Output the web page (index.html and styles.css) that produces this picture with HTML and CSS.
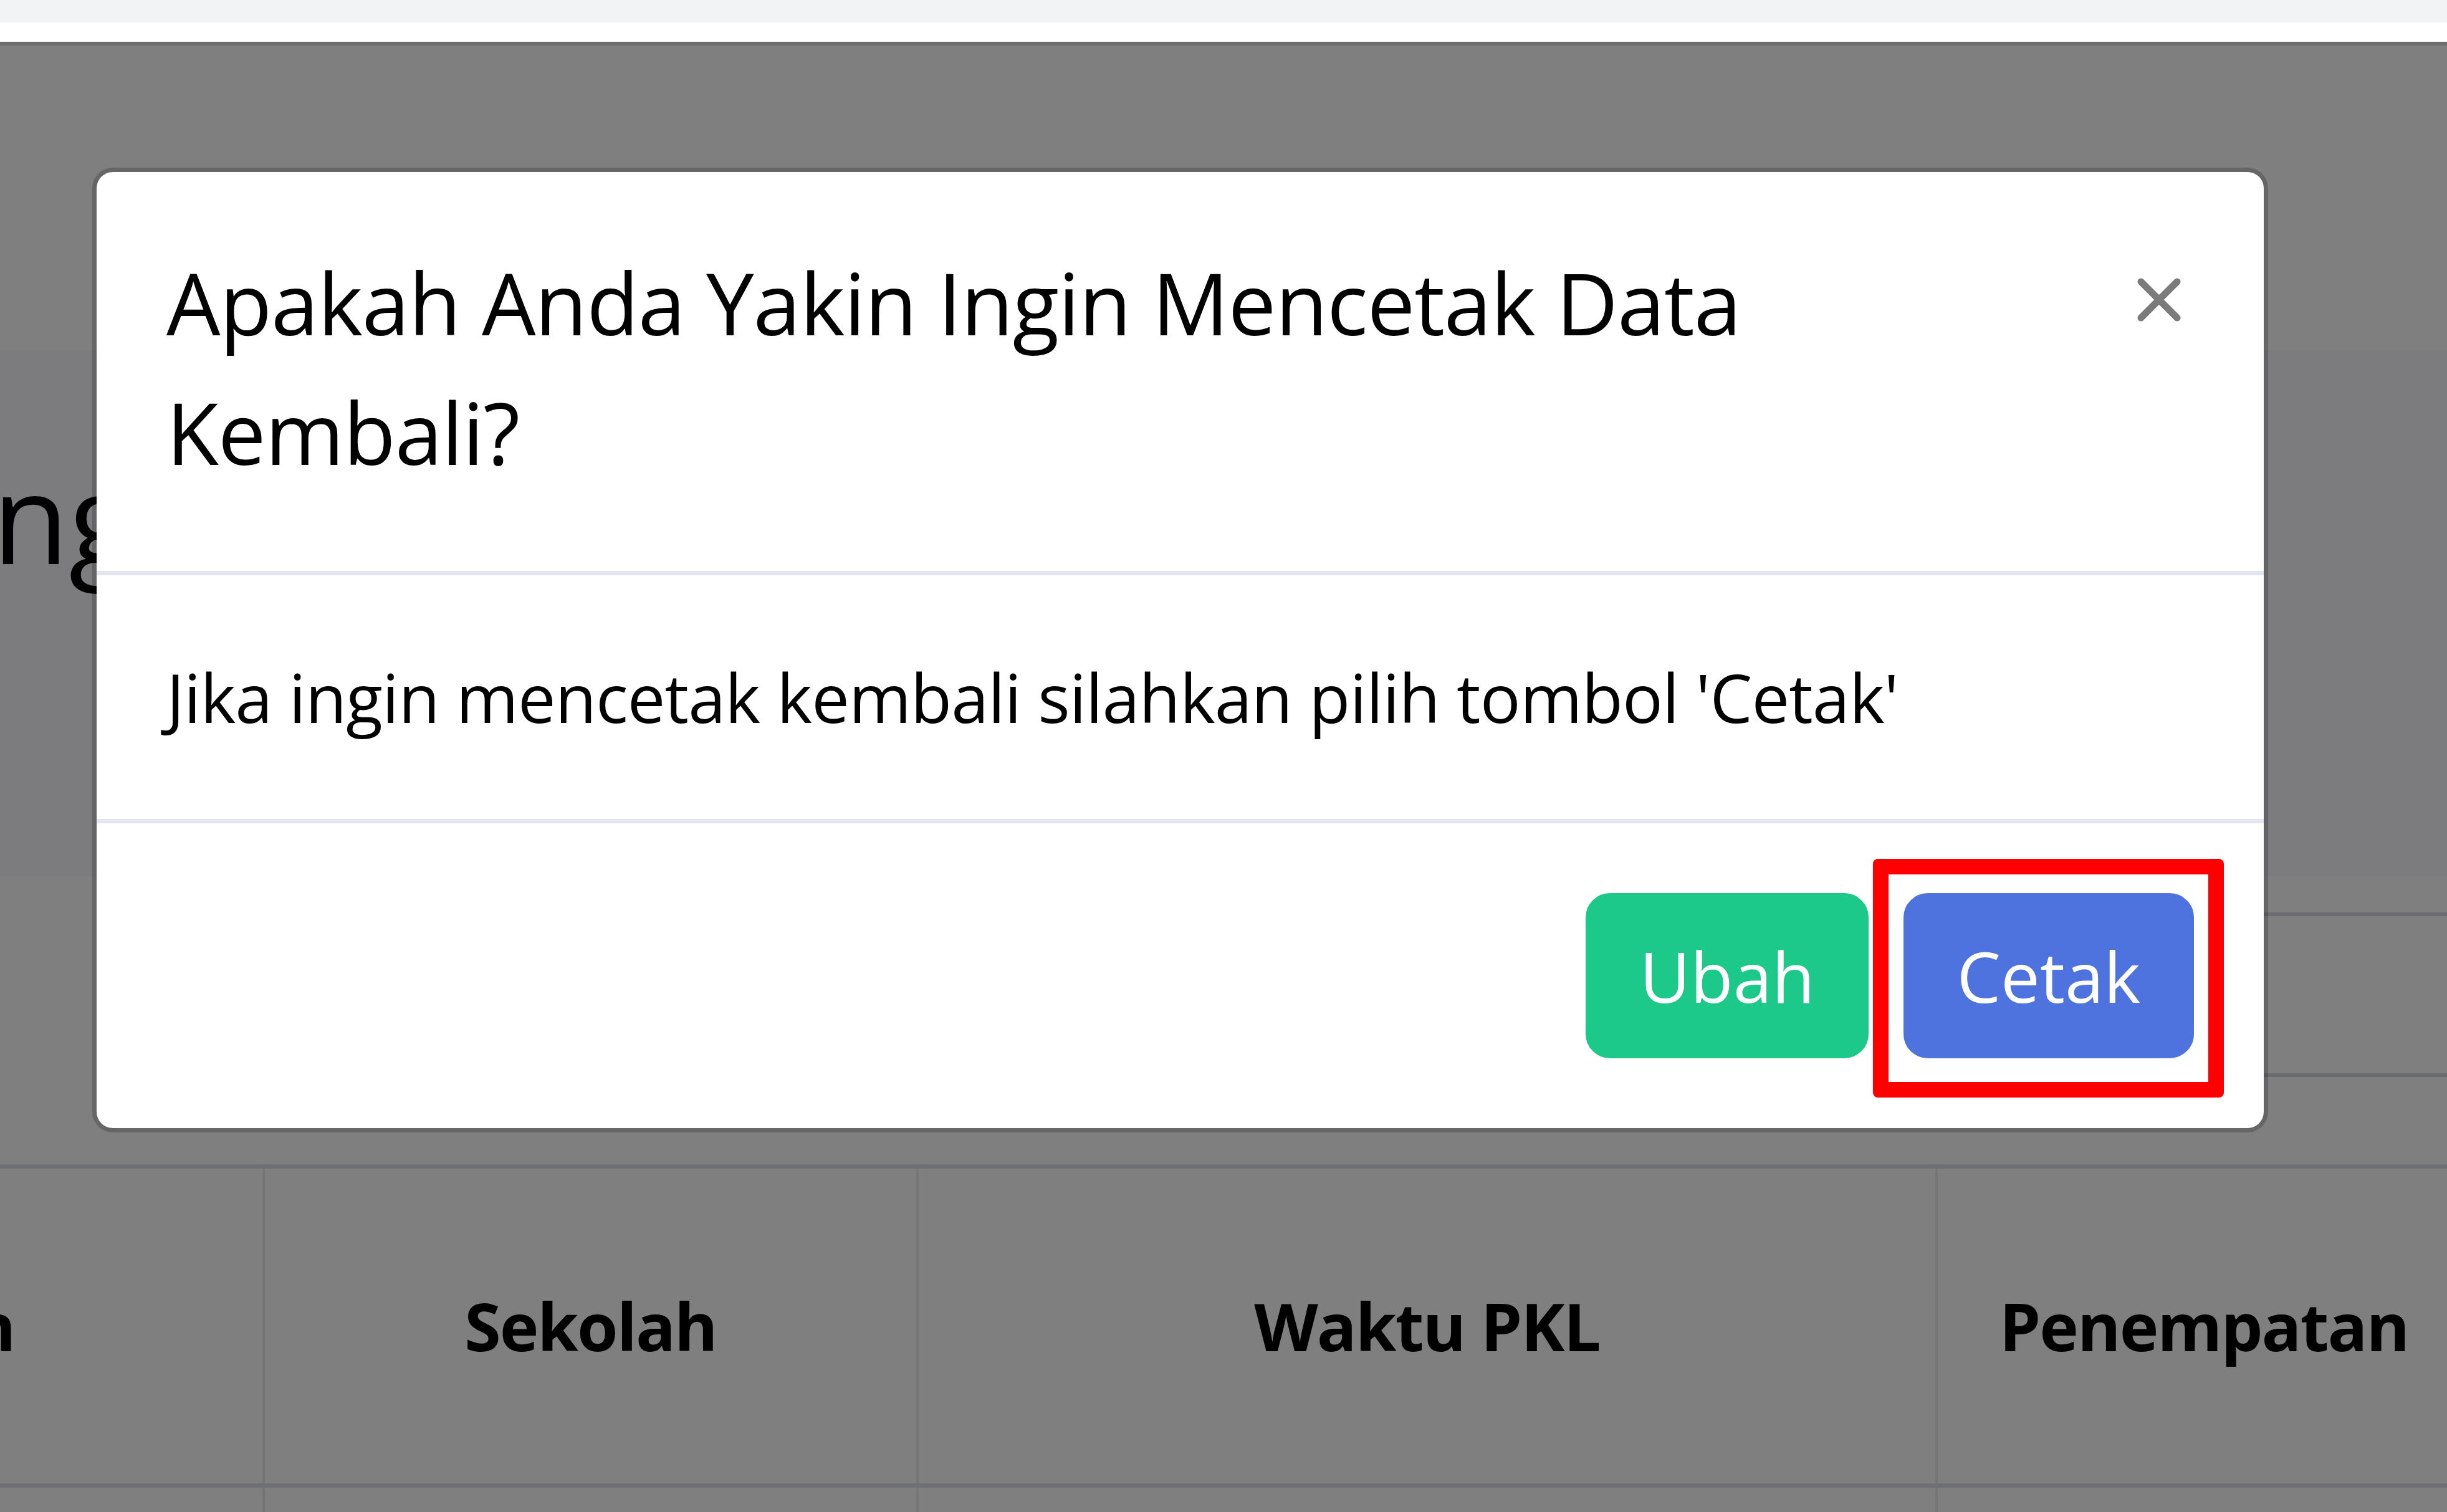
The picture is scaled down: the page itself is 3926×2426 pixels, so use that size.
FILE: index.html
```html
<!DOCTYPE html>
<html lang="id">
<head>
<meta charset="utf-8">
<title>Cetak Data</title>
<link rel="stylesheet" href="styles.css">
</head>
<body>
  <div class="chrome">
    <div class="chrome-tabs"></div>
    <div class="chrome-toolbar"></div>
  </div>

  <div class="page">
    <header class="topbar"></header>
    <main class="content">
      <h1 class="page-title">Magang</h1>
      <section class="card">
        <div class="filter">
          <input class="search" type="search" aria-label="Search">
        </div>
        <table class="table">
          <colgroup>
            <col class="c1"><col class="c2"><col class="c3"><col class="c4">
          </colgroup>
          <thead>
            <tr><th class="th-first">Jurusan</th><th>Sekolah</th><th>Waktu PKL</th><th>Penempatan</th></tr>
          </thead>
          <tbody>
            <tr><td></td><td></td><td></td><td></td></tr>
          </tbody>
        </table>
      </section>
    </main>
  </div>

  <div class="backdrop"></div>

  <div class="modal" role="dialog">
    <div class="modal-dialog">
      <div class="modal-content">
        <div class="modal-header">
          <h5 class="modal-title">Apakah Anda Yakin Ingin Mencetak Data Kembali?</h5>
          <button class="close" type="button" aria-label="Close">
            <svg viewBox="0 0 110 167" aria-hidden="true">
              <path d="M25 64 L83 122 M83 64 L25 122" stroke="#7b7b7b" stroke-width="11" stroke-linecap="round" fill="none"/>
            </svg>
          </button>
        </div>
        <div class="modal-body">Jika ingin mencetak kembali silahkan pilih tombol 'Cetak'</div>
        <div class="modal-footer">
          <button class="btn btn-success" type="button">Ubah</button>
          <button class="btn btn-primary" type="button">Cetak<span class="highlight"></span></button>
        </div>
      </div>
    </div>
  </div>
</body>
</html>
```

FILE: styles.css
```css
* { box-sizing: border-box; }

html, body { margin: 0; padding: 0; }

body {
  width: 3926px;
  height: 2426px;
  overflow: hidden;
  position: relative;
  background: #ffffff;
  color: #000000;
  font-family: "Open Sans", "Noto Sans", sans-serif;
}

/* browser chrome strip (not covered by the backdrop) */
.chrome { height: 67px; display: flex; flex-direction: column; }
.chrome-tabs { height: 36px; background: #f1f3f4; }
.chrome-toolbar { flex: 1; background: #ffffff; }

/* page behind the modal */
.page { background: #f8f9fc; height: 2359px; }

.topbar {
  height: 495px;
  background: #ffffff;
  border-top: 6px solid #dadada;
}

.content { padding-top: 146px; }

.page-title {
  margin: 0 0 0 -523px;
  font-size: 200px;
  line-height: 240px;
  font-weight: 400;
  white-space: nowrap;
  color: #000;
}

.card {
  margin: 458px 0 0 -821px;
  width: 4784px;
  height: 1200px;
  background: #ffffff;
  padding-top: 58px;
}

.filter { display: flex; justify-content: flex-end; height: 264px; }

.search {
  width: 1000px;
  height: 264px;
  border: 6px solid #d4d6e0;
  border-right: 0;
  background: #fff;
  margin: 0;
}

.table {
  margin-top: 140px;
  border-collapse: collapse;
  table-layout: fixed;
  width: 4784px;
}

.c1 { width: 1242px; }
.c2 { width: 1049px; }
.c3 { width: 1635px; }
.c4 { width: 858px; }

.table th,
.table td {
  border-left: 4px solid #e9eaef;
  border-right: 4px solid #e9eaef;
  border-top: 7px solid #dfe0e7;
  border-bottom: 7px solid #dfe0e7;
  padding: 0 84px;
}

.table th {
  height: 512px;
  vertical-align: middle;
  text-align: center;
  font-size: 106px;
  letter-spacing: -2px;
  line-height: 167px;
  font-weight: 700;
  color: #000;
  white-space: nowrap;
}

.table th.th-first { padding-left: 108px; padding-right: 60px; }

.table td { height: 400px; }

/* modal */
.backdrop {
  position: fixed;
  left: 0; right: 0; top: 67px; bottom: 0;
  background: rgba(0, 0, 0, 0.5);
  z-index: 10;
}

.modal {
  position: fixed;
  left: 0; right: 0; top: 0; bottom: 0;
  z-index: 20;
}

.modal-dialog {
  width: 3491px;
  margin: 269px 0 0 148px;
}

.modal-content {
  background: #ffffff;
  background-clip: padding-box;
  border: 7px solid rgba(0, 0, 0, 0.2);
  border-radius: 33px;
}

.modal-header {
  display: flex;
  align-items: flex-start;
  justify-content: space-between;
  padding: 105px 112px 119px;
  border-bottom: 7px solid #e3e6f0;
}

.modal-title {
  margin: 0;
  font-size: 137px;
  letter-spacing: -1.2px;
  line-height: 208px;
  font-weight: 400;
  color: #000;
}

.close {
  padding: 112px;
  margin: -105px -112px -119px auto;
  background: transparent;
  border: 0;
  line-height: 0;
  flex: none;
}

.close svg { display: block; width: 110px; height: 167px; }

.modal-body {
  padding: 112px;
  font-size: 108px;
  letter-spacing: -0.9px;
  line-height: 167px;
  color: #000;
}

.modal-footer {
  display: flex;
  justify-content: flex-end;
  align-items: center;
  padding: 84px;
  border-top: 7px solid #e3e6f0;
}

.btn {
  margin: 28px;
  font-family: inherit;
  font-size: 112px;
  line-height: 167px;
  font-weight: 400;
  padding: 42px 79px;
  border: 7px solid transparent;
  border-radius: 39px;
  color: #ffffff;
}

.btn-success { background: #1cc88a; border-color: #1cc88a; }
.btn-primary { background: #4e73df; border-color: #4e73df; position: relative; }

.highlight {
  position: absolute;
  top: -62px; left: -56px; right: -55px; bottom: -70px;
  border: 25px solid #ff0000;
  border-radius: 8px;
  pointer-events: none;
}
```
